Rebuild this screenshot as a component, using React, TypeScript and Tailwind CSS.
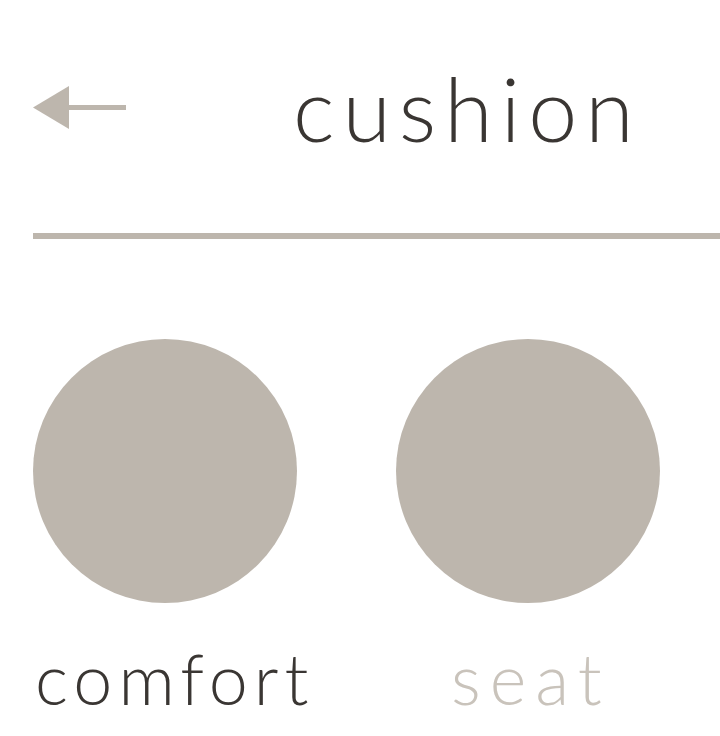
import React from "react";

function BackArrow() {
  return (
    <svg width="94" height="44" viewBox="0 0 94 44" className="block">
      <polygon points="0,21.5 36,0 36,43" fill="#bdb6ad" />
      <rect x="35" y="19" width="58" height="5" fill="#bdb6ad" />
    </svg>
  );
}

function Option({
  label,
  active,
  labelClass,
}: {
  label: string;
  active: boolean;
  labelClass: string;
}) {
  return (
    <div className="flex flex-col w-[264px]">
      <div className="w-[264px] h-[264px] rounded-full bg-[#bdb6ad]" />
      <div
        className={
          "mt-[40px] text-[70px] leading-none font-light whitespace-nowrap " +
          labelClass +
          " " +
          (active ? "text-[#3a3633]" : "text-[#c9c3bb]")
        }
      >
        {label}
      </div>
    </div>
  );
}

export default function App() {
  return (
    <div
      className="w-[720px] h-[736px] bg-white overflow-hidden pl-[33px]"
      style={{ fontFamily: "Lato, 'Open Sans', sans-serif" }}
    >
      <div className="flex items-center h-[216px]">
        <BackArrow />
        <div className="ml-[166px] text-[88px] leading-none tracking-[8px] font-light text-[#3a3633]">
          cushion
        </div>
      </div>
      <div className="h-[6px] bg-[#bdb6ad] mt-[17px]" />
      <div className="flex gap-[99px] mt-[100px]">
        <Option label="comfort" active={true} labelClass="pl-[2px] tracking-[6px]" />
        <Option label="seat" active={false} labelClass="pl-[55px] tracking-[9px]" />
      </div>
    </div>
  );
}
